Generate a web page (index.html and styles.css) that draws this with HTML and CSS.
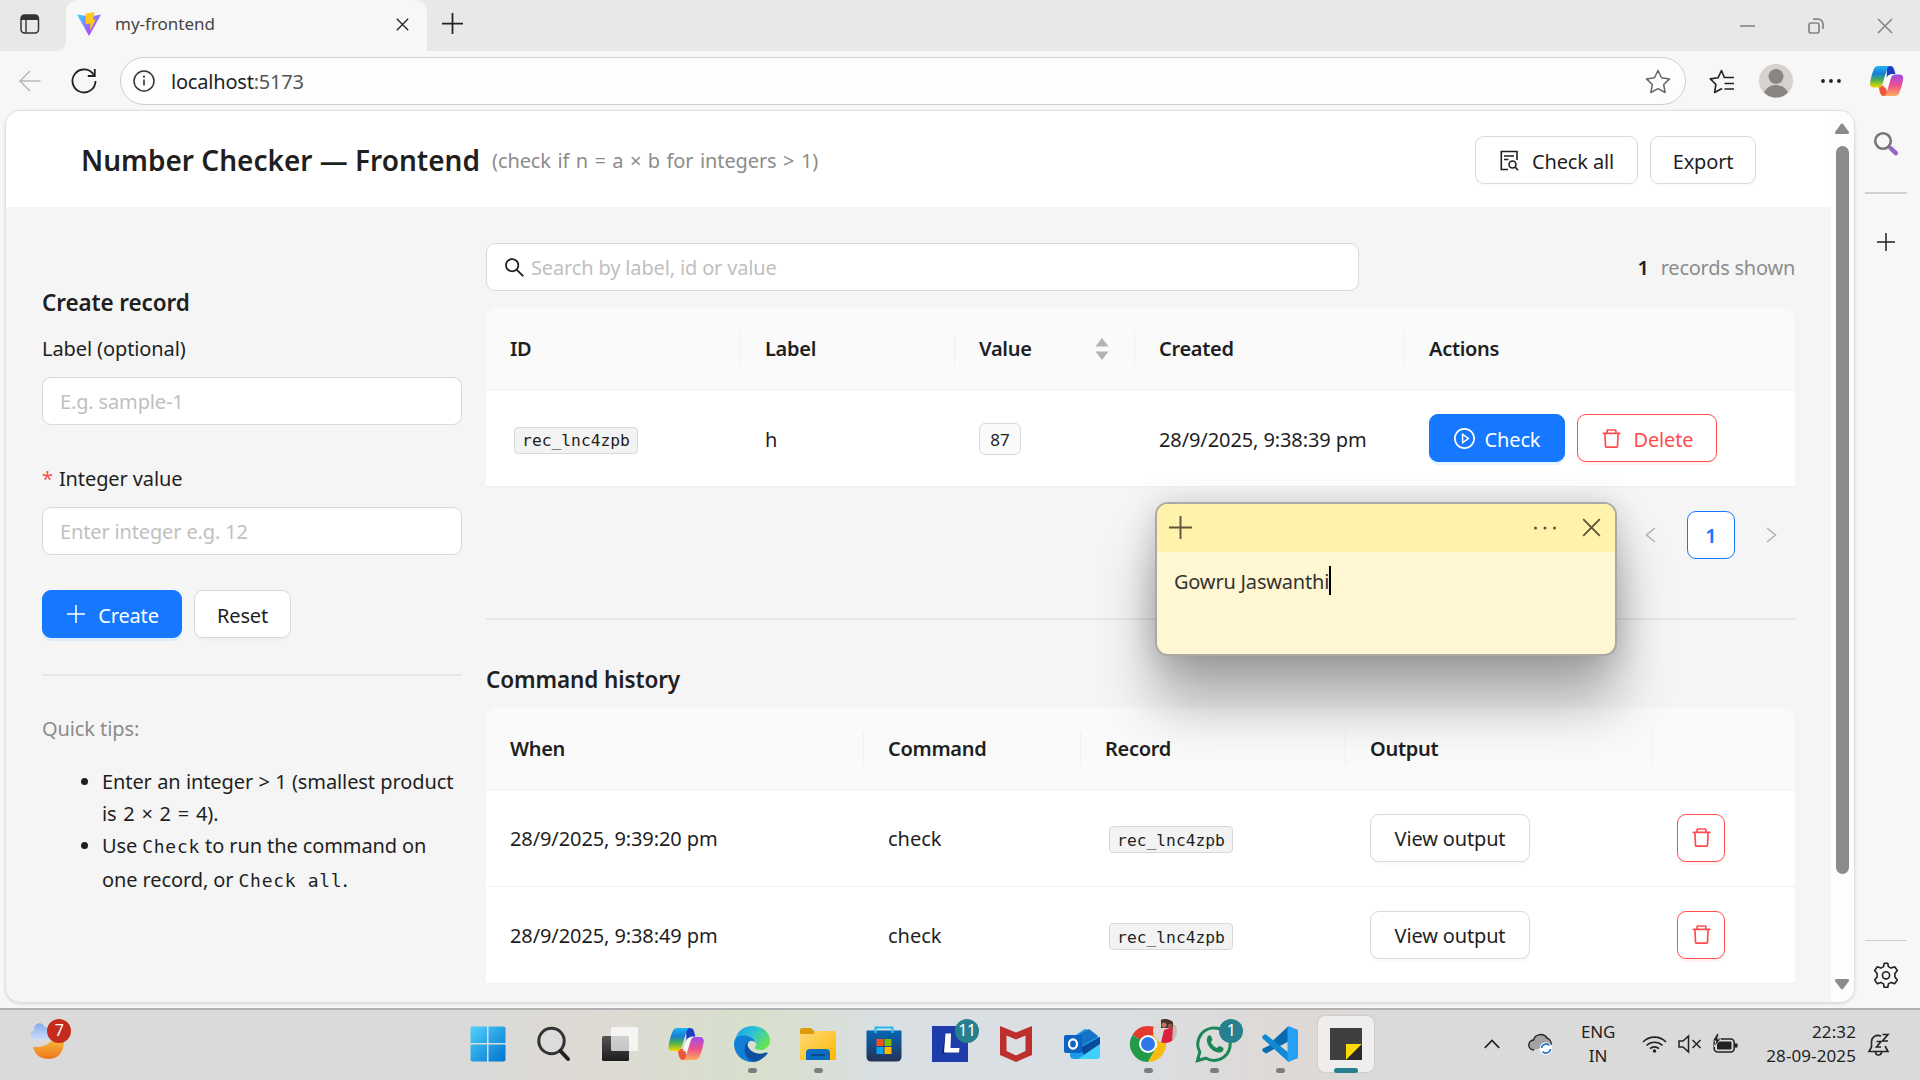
FILE: index.html
```html
<!DOCTYPE html>
<html lang="en">
<head>
<meta charset="utf-8">
<title>my-frontend</title>
<link rel="stylesheet" href="styles.css">
</head>
<body>
<svg class="defs" width="0" height="0" aria-hidden="true">
  <defs>
    <linearGradient id="cp1" x1="0" y1="0" x2="0" y2="1"><stop offset="0" stop-color="#1fb4f4"/><stop offset=".35" stop-color="#1480d8"/><stop offset=".65" stop-color="#4caf50"/><stop offset="1" stop-color="#f7d800"/></linearGradient>
    <linearGradient id="cp2" x1="0" y1="0" x2="0" y2="1"><stop offset="0" stop-color="#9a4dee"/><stop offset=".5" stop-color="#ee4f8e"/><stop offset="1" stop-color="#ffab5c"/></linearGradient>
    <linearGradient id="win" x1="0" y1="0" x2="1" y2="1"><stop offset="0" stop-color="#50d2fb"/><stop offset="1" stop-color="#0072cf"/></linearGradient>
    <linearGradient id="ed1" x1="0" y1="0" x2="1" y2=".6"><stop offset="0" stop-color="#1a9be8"/><stop offset=".5" stop-color="#2dc3d6"/><stop offset="1" stop-color="#66e351"/></linearGradient>
    <linearGradient id="fold" x1="0" y1="0" x2="1" y2="1"><stop offset="0" stop-color="#ffd97a"/><stop offset="1" stop-color="#fcb900"/></linearGradient>
    <linearGradient id="store" x1="0" y1="0" x2="0" y2="1"><stop offset="0" stop-color="#0566b4"/><stop offset="1" stop-color="#263258"/></linearGradient>
    <linearGradient id="moon" x1="0" y1="0" x2="0" y2="1"><stop offset="0" stop-color="#f5b73c"/><stop offset="1" stop-color="#f0761c"/></linearGradient>
    <linearGradient id="cloud" x1="0" y1="0" x2="0" y2="1"><stop offset="0" stop-color="#86aeea"/><stop offset="1" stop-color="#c9dcf8"/></linearGradient>
    <linearGradient id="vite" x1="0" y1="0" x2="1" y2="1"><stop offset="0" stop-color="#41d1ff"/><stop offset=".6" stop-color="#9a5cff"/><stop offset="1" stop-color="#d02bff"/></linearGradient>
    <linearGradient id="dark" x1="0" y1="0" x2="0" y2="1"><stop offset="0" stop-color="#555"/><stop offset="1" stop-color="#1c1c1c"/></linearGradient>
    <symbol id="i-copilot" viewBox="0 0 36 34">
      <path d="M18 1h4c2.500 0 3.500 1.500 4.200 4l1.300 4.500H24c-3 0-4.500 2-5.500 5z" fill="#1a3fc4"/>
      <path d="M9.500 22h6.800l4 11H15c-2.600 0-3.500-2-4.200-4.500z" fill="#f0563a"/>
      <path d="M9.600 1H22c-2 0-3 1.600-3.800 4.300l-4.400 14.500C13 22.500 12 24 9.300 24H4.500C1.500 24 0 22.200.6 18.700 1.600 12.500 3 8 4.500 4.500 5.500 2 7 1 9.600 1z" fill="url(#cp1)"/>
      <path d="M26.400 33H14.500c2 0 3-1.600 3.800-4.300l4.200-14.200c.8-2.700 2-4.500 4.700-4.500h4.500c3.500 0 4.500 2.500 3.900 5.500-1 6-2.500 10.500-4 14-1 2.500-2.600 3.500-5.200 3.500z" fill="url(#cp2)"/>
      <path d="M18.800 12.500q.6-1.500 2-1.500h2.700q-.8 1-1.200 2.500l-2.800 9q-.5 1.500-2 1.500h-3q.9-1 1.300-2.500z" fill="#fff" opacity=".85"/>
    </symbol>
    <symbol id="i-trash" viewBox="64 64 896 896"><path fill="currentColor" d="M360 184h-8c4.400 0 8-3.600 8-8v8h304v-8c0 4.400 3.600 8 8 8h-8v72h72v-80c0-35.300-28.700-64-64-64H352c-35.300 0-64 28.700-64 64v80h72v-72zm504 72H160c-17.700 0-32 14.300-32 32v32c0 4.400 3.600 8 8 8h60.400l24.700 523c1.600 34.100 29.800 61 63.900 61h454c34.200 0 62.300-26.800 63.900-61l24.700-523H888c4.400 0 8-3.600 8-8v-32c0-17.700-14.300-32-32-32zM731.300 840H292.700l-24.200-512h487l-24.200 512z"/></symbol>
    <symbol id="i-search" viewBox="64 64 896 896"><path fill="currentColor" d="M909.600 854.500L649.900 594.800C690.200 542.700 712 479 712 412c0-80.200-31.300-155.400-87.900-212.100-56.600-56.700-132-87.900-212.100-87.900s-155.500 31.300-212.100 87.900C143.200 256.500 112 331.800 112 412c0 80.100 31.300 155.500 87.900 212.100C256.500 680.800 331.800 712 412 712c67 0 130.600-21.800 182.700-62l259.700 259.600a8.200 8.200 0 0011.600 0l43.600-43.500a8.200 8.200 0 000-11.600zM570.400 570.400C528 612.700 471.800 636 412 636s-116-23.300-158.400-65.600C211.300 528 188 471.800 188 412s23.300-116.100 65.600-158.400C296 211.300 352.200 188 412 188s116.100 23.200 158.400 65.600S636 352.200 636 412s-23.300 116.100-65.600 158.400z"/></symbol>
    <symbol id="i-play" viewBox="64 64 896 896"><path fill="currentColor" d="M512 64C264.600 64 64 264.600 64 512s200.600 448 448 448 448-200.600 448-448S759.400 64 512 64zm0 820c-205.400 0-372-166.600-372-372s166.600-372 372-372 372 166.600 372 372-166.600 372-372 372z"/><path fill="currentColor" d="M719.400 499.100l-296.100-215A15.900 15.900 0 00398 297v430c0 13.100 14.800 20.500 25.300 12.900l296.100-215a15.900 15.900 0 000-25.800zm-257.600 134V390.900L628.500 512 461.800 633.100z"/></symbol>
    <symbol id="i-close" viewBox="0 0 16 16"><path d="M1 1l14 14M15 1L1 15" fill="none" stroke="currentColor" stroke-width="1.600"/></symbol>
    <symbol id="i-plus" viewBox="0 0 18 18"><path d="M9 0v18M0 9h18" fill="none" stroke="currentColor" stroke-width="1.500"/></symbol>
  </defs>
</svg>

<div class="desktop">
  <header class="tabstrip">
    <div class="tab-menu"><svg width="22" height="22" viewBox="0 0 22 22"><rect x="2" y="2" width="17.500" height="18" rx="3.500" fill="none" stroke="#333" stroke-width="1.500"/><path d="M2 7V5.500A3.500 3.500 0 015.500 2h10.500a3.500 3.500 0 013.500 3.500V7z" fill="#333"/><path d="M7 7v13" stroke="#333" stroke-width="1.400"/></svg></div>
    <div class="tab">
      <svg width="24" height="24" viewBox="0 0 24 24"><path d="M0 2.500l12 21.500L24 2.500 13 4.500z" fill="url(#vite)"/><path d="M8.500 1.800L17.500 0l-1.500 7.500h2.800L13 18.800l.3-7.300-4.600.8z" fill="#ffc61c"/></svg>
      <span class="tab-title">my-frontend</span>
      <svg class="ink" width="13" height="13"><use href="#i-close"/></svg>
    </div>
    <svg class="new-tab ink" width="21" height="21"><use href="#i-plus"/></svg>
    <div class="win-ctl">
      <svg width="15" height="15" viewBox="0 0 15 15"><path d="M0 8h15" stroke="#858585" stroke-width="1.600"/></svg>
      <svg width="16" height="16" viewBox="0 0 16 16" fill="none" stroke="#858585" stroke-width="1.700"><rect x="1" y="5" width="10" height="10" rx="2"/><path d="M5 1.200h5a5 5 0 015 5V11"/></svg>
      <svg width="16" height="16"><use href="#i-close"/></svg>
    </div>
  </header>

  <div class="toolbar">
    <svg class="back" width="22" height="22" viewBox="0 0 22 22" fill="none" stroke="#b9b9b9" stroke-width="1.500"><path d="M21.500 11H1M11 1L1 11l10 10"/></svg>
    <svg class="reload" width="26" height="26" viewBox="0 0 26 26" fill="none" stroke="#222" stroke-width="1.800"><path d="M24.500 13A11.500 11.500 0 1121.500 5.200L23.500 7.500M23.800 1v7h-7"/></svg>
    <div class="address">
      <svg width="22" height="22" viewBox="0 0 22 22"><circle cx="11" cy="11" r="10" fill="none" stroke="#333" stroke-width="1.500"/><path d="M11 9.500v6" stroke="#333" stroke-width="1.600"/><circle cx="11" cy="6.700" r="1.100" fill="#333"/></svg>
      <span class="url">localhost<span class="port">:5173</span></span>
      <svg width="26" height="25" viewBox="0 0 26 25" fill="none" stroke="#666" stroke-width="1.500" stroke-linejoin="round"><path d="M13 1.500l3.500 7.300 8 1.100-5.800 5.600 1.400 8L13 19.700l-7.100 3.800 1.400-8L1.500 9.900l8-1.100z"/></svg>
    </div>
    <svg class="favs" width="26" height="25" viewBox="0 0 26 25" fill="none" stroke="#222" stroke-width="1.600" stroke-linejoin="round"><path d="M15.500 9L12.500 1.500 9 8.800l-7.700 1.100 5.600 5.600-1.300 8L13 19.500M15 8.500h10M15.500 14.500H25M15.500 20H25"/></svg>
    <svg class="avatar" width="34" height="34" viewBox="0 0 34 34"><clipPath id="av"><circle cx="17" cy="17" r="16.500"/></clipPath><circle cx="17" cy="17" r="17" fill="#d5d2cf"/><g clip-path="url(#av)" fill="#8a8582"><circle cx="17" cy="12.500" r="7.500"/><ellipse cx="17" cy="32" rx="12.500" ry="11"/></g></svg>
    <svg class="more" width="20" height="6" viewBox="0 0 20 6" fill="#222"><circle cx="2" cy="3" r="1.900"/><circle cx="10" cy="3" r="1.900"/><circle cx="18" cy="3" r="1.900"/></svg>
    <svg class="copilot" width="35" height="32"><use href="#i-copilot"/></svg>
  </div>

  <div class="browser-body">
    <main class="viewport">
      <div class="page">
        <div class="app-header">
          <h1>Number Checker — Frontend</h1>
          <span class="subtitle">(check if n = a × b for integers &gt; 1)</span>
          <button class="btn btn-all"><svg width="21" height="21" viewBox="0 0 21 21" fill="none" stroke="currentColor" stroke-width="1.600"><path d="M9 19.500H2.300V1.500H18v8.500M5 6h10M5 9.500h4.500"/><circle cx="13.500" cy="14.500" r="3.500"/><path d="M16 17l3 3.300"/></svg><span>Check all</span></button>
          <button class="btn btn-export"><span>Export</span></button>
        </div>
        <div class="content">
          <aside class="side">
            <h2>Create record</h2>
            <label class="f-label">Label (optional)</label>
            <div class="input">E.g. sample-1</div>
            <label class="f-label second"><b class="req">*</b>Integer value</label>
            <div class="input">Enter integer e.g. 12</div>
            <div class="buttons">
              <button class="btn primary btn-create"><svg width="18" height="18"><use href="#i-plus"/></svg><span>Create</span></button>
              <button class="btn btn-reset"><span>Reset</span></button>
            </div>
            <hr>
            <p class="tips-title">Quick tips:</p>
            <ul class="tips">
              <li><span class="l1">Enter an integer &gt; 1 (smallest product</span><br><span class="ops">is 2 × 2 = 4).</span></li>
              <li>Use <code>Check</code> to run the command on<br><span class="last">one record, or <code>Check all</code>.</span></li>
            </ul>
          </aside>
          <section class="main">
            <div class="search-row">
              <div class="input search"><svg width="21" height="21"><use href="#i-search"/></svg><span>Search by label, id or value</span></div>
              <div class="count"><b>1</b><span>records shown</span></div>
            </div>
            <div class="table records">
              <div class="row head"><div>ID</div><div>Label</div><div class="sort">Value<svg width="14" height="22" viewBox="0 0 14 22" fill="#b3b3b3"><path d="M7 0l6.500 8.500H.5zM7 22l6.500-8.500H.5z"/></svg></div><div>Created</div><div>Actions</div></div>
              <div class="row"><div><span class="code">rec_lnc4zpb</span></div><div class="txt">h</div><div class="txt"><span class="tag">87</span></div><div class="date">28/9/2025, 9:38:39 pm</div>
                <div class="acts"><button class="btn primary btn-check"><svg width="21" height="21"><use href="#i-play"/></svg><span>Check</span></button><button class="btn danger btn-delete"><svg width="21" height="21"><use href="#i-trash"/></svg><span>Delete</span></button></div></div>
            </div>
            <div class="pager">
              <svg width="11" height="16" viewBox="0 0 11 16" fill="none" stroke="#b5b5b5" stroke-width="1.600"><path d="M10 1L1.500 8l8.500 7"/></svg>
              <span class="pg">1</span>
              <svg width="11" height="16" viewBox="0 0 11 16" fill="none" stroke="#b5b5b5" stroke-width="1.600"><path d="M1 1l8.500 7L1 15"/></svg>
            </div>
            <hr class="main-hr">
            <h2 class="hist">Command history</h2>
            <div class="table history">
              <div class="row head"><div>When</div><div>Command</div><div>Record</div><div>Output</div><div></div></div>
              <div class="row"><div class="date">28/9/2025, 9:39:20 pm</div><div class="txt">check</div><div><span class="code">rec_lnc4zpb</span></div><div><button class="btn btn-view"><span>View output</span></button></div><div><button class="btn danger btn-icon"><svg width="21" height="21"><use href="#i-trash"/></svg></button></div></div>
              <div class="row"><div class="date">28/9/2025, 9:38:49 pm</div><div class="txt">check</div><div><span class="code">rec_lnc4zpb</span></div><div><button class="btn btn-view"><span>View output</span></button></div><div><button class="btn danger btn-icon"><svg width="21" height="21"><use href="#i-trash"/></svg></button></div></div>
            </div>
          </section>
        </div>
      </div>
      <div class="scrollbar">
        <svg width="14" height="11" viewBox="0 0 14 11"><path d="M5.800 1.200a1.500 1.500 0 012.400 0L14 9q.3 2-1.200 2H1.200Q-.3 11 0 9z" fill="#8b8b8b"/></svg>
        <div class="thumb"></div>
        <svg class="down" width="14" height="11" viewBox="0 0 14 11"><path d="M5.800 9.800a1.500 1.500 0 002.400 0L14 2q.3-2-1.200-2H1.200Q-.3 0 0 2z" fill="#8b8b8b"/></svg>
      </div>
    </main>
    <nav class="sidebar">
      <svg width="26" height="26" viewBox="0 0 26 26"><circle cx="10" cy="10" r="7.800" fill="none" stroke="#777" stroke-width="2.600"/><path d="M15.500 15.500l2.500 2.500" stroke="#777" stroke-width="3"/><path d="M18 17.500l4.800 4.600" stroke="#9565cc" stroke-width="4.500" stroke-linecap="round"/></svg>
      <span class="line"></span>
      <svg class="ink" width="18" height="18"><use href="#i-plus"/></svg>
      <span class="line bottom"></span>
      <svg width="26" height="27" viewBox="0 0 26 27" fill="none" stroke="#222" stroke-width="1.600" stroke-linejoin="round"><path d="M10.600 4.600L11.200 1.300h3.600l.6 3.300 2.700 1.500 3.600-1.300 2.600 3.700-2.400 3v3.500l2.400 3-2.600 3.700-3.600-1.300-2.700 1.500-.6 3.400h-3.600l-.6-3.400-2.700-1.500-3.600 1.300-2.600-3.700 2.400-3v-3.500l-2.400-3 2.600-3.700 3.600 1.300z"/><circle cx="13" cy="13.300" r="3.600"/></svg>
    </nav>
  </div>

  <footer class="taskbar">
    <div class="weather">
      <svg width="38" height="36" viewBox="0 0 38 36"><path d="M3 23q13 1 19-7l12 0q0 18-15 19Q6 35 3 23z" fill="url(#moon)"/><path d="M4.500 15.500a4.700 4.700 0 01-.5-9 5.500 5.500 0 0111-3 7 7 0 019 6.500v5.500z" fill="url(#cloud)"/></svg>
      <span class="badge red">7</span>
    </div>
    <div class="apps">
      <div class="app"><svg width="36" height="36" viewBox="0 0 36 36"><path d="M.5 2.500a2 2 0 012-2H17V17H.500zM18.500.5h15a2 2 0 012 2V17h-17zM.5 18.500H17v17H2.500a2 2 0 01-2-2zM18.500 18.500h17v15a2 2 0 01-2 2h-15z" fill="url(#win)"/></svg></div>
      <div class="app"><svg width="34" height="36" viewBox="0 0 34 36"><circle cx="14.500" cy="15" r="12.700" fill="#dcdcdc" stroke="#333" stroke-width="3"/><path d="M23.500 25l7.500 8" stroke="#222" stroke-width="4" stroke-linecap="round"/></svg></div>
      <div class="app"><svg width="36" height="34" viewBox="0 0 36 34"><rect x="0" y="9" width="27" height="25" rx="1.500" fill="url(#dark)"/><rect x="9" y="0" width="27" height="24" rx="1.500" fill="#fff" opacity=".72"/></svg></div>
      <div class="app"><svg width="36" height="34"><use href="#i-copilot"/></svg></div>
      <div class="app run"><svg width="36" height="36" viewBox="0 0 36 36"><path d="M1 14C3 5 10 0 18.500 0 29 0 36 7 36 14.500c0 6-4.500 9.500-9.500 9.500-4 0-6-1.500-5.500-3 1.500-1 1.500-3 1-4.500C20 10 8 7 1 14z" fill="url(#ed1)"/><path d="M0 18C0 11 6 9 11 9.500c6 .5 10.500 4 11 8-2-4-8-4-9 2C12 27 18 33 26 34c-3 1.500-6 2-8 2C8 36 0 28 0 18z" fill="#0f7fd8"/><path d="M14 15.500C8.500 20 9 33 20 35.800 26 35 31 31 33.500 27.500c.5-1-.3-1.300-1.500-.9-8 3-16-.6-18-6-.7-2-.7-3.500 0-5.100z" fill="#0f4fa0"/></svg></div>
      <div class="app run"><svg width="36" height="34" viewBox="0 0 36 34"><path d="M0 3a2 2 0 012-2h9l4 4v3H0z" fill="#dd9b0c"/><path d="M0 7h13l3-3h18a2 2 0 012 2v27H0z" fill="url(#fold)"/><path d="M6 33v-7a4 4 0 014-4h16a4 4 0 014 4v7z" fill="#0c6cc0"/><path d="M11 28h14" stroke="#084a8c" stroke-width="2"/></svg></div>
      <div class="app"><svg width="36" height="36" viewBox="0 0 36 36"><path d="M9.500 8V1.500h17V8" fill="none" stroke="#22b8ef" stroke-width="2"/><path d="M.5 4.500h35V31a4.500 4.500 0 01-4.500 4.500H5A4.500 4.500 0 01.5 31z" fill="url(#store)"/><path d="M9.500 3v4M26.500 3v4" stroke="#35c9fa" stroke-width="2"/><path d="M10.500 13h7v7h-7z" fill="#f25022"/><path d="M18.500 13h7v7h-7z" fill="#7fba00"/><path d="M10.500 21h7v7h-7z" fill="#00a4ef"/><path d="M18.500 21h7v7h-7z" fill="#ffb900"/></svg></div>
      <div class="app"><svg width="36" height="36" viewBox="0 0 36 36"><path d="M0 0h36v36H0z" fill="#1e3dab"/><path d="M13 11l-3 16 4 1 2-18z" fill="#0d2670"/><path d="M13.500 7.500h5.500L18.500 22h9l-.5 4.500H12z" fill="#fff"/></svg><span class="badge">11</span></div>
      <div class="app"><svg width="32" height="36" viewBox="0 0 32 36"><path d="M0 0l16 6.500L32 0v29l-16 7-16-7zM6.500 9.500V25L16 29.500 25.500 25V9.500L16 13.500z" fill="#bd2f2c"/></svg></div>
      <div class="app"><svg width="36" height="32" viewBox="0 0 36 32"><path d="M6 11L20 1.500q1.500-.8 3 0L36 10v17a4 4 0 01-4 4H10a4 4 0 01-4-4z" fill="#1c9be8"/><path d="M16 20L36 9v7L20 27z" fill="#0a4a9a"/><path d="M9 10L25 1l9 7-18 11z" fill="#1673ca"/><path d="M14 31L36 16v11a4 4 0 01-4 4z" fill="#3fd0fb"/><rect x="0" y="7" width="18" height="18" rx="2" fill="#0c64c0"/><ellipse cx="9" cy="16" rx="4" ry="4.600" fill="none" stroke="#fff" stroke-width="2.200"/></svg></div>
      <div class="app run"><svg width="36" height="36" viewBox="0 0 36 36"><path d="M18 18L2.400 9A18 18 0 0133.600 9z" fill="#e33b2e"/><path d="M18 18L2.400 9A18 18 0 0018 36l8-14z" fill="#229a48"/><path d="M18 18L33.600 9H18A9 9 0 0126 22.500L18 36A18 18 0 0033.600 9z" fill="#fbbc12"/><circle cx="18" cy="18" r="9" fill="#fff"/><circle cx="18" cy="18" r="7" fill="#2f78ec"/></svg>
        <svg class="badge photo" viewBox="0 0 24 24"><clipPath id="ph"><circle cx="12" cy="12" r="12"/></clipPath><g clip-path="url(#ph)"><path d="M0 0h24v24H0z" fill="#ddd8d6"/><path d="M8 0h12v9H8z" fill="#4b3029"/><path d="M8 24l3-13 9-3 1 16z" fill="#d9203f"/><path d="M20 6h4v18h-5z" fill="#c9bdb6"/><circle cx="11" cy="6" r="2.500" fill="#b27a62"/><circle cx="17" cy="7" r="2.300" fill="#8d5a48"/></g></svg></div>
      <div class="app run"><svg width="36" height="36" viewBox="0 0 36 36"><path d="M1.500 34.500l2.300-8.600A16.200 16.200 0 1110 32.200z" fill="none" stroke="#1b8755" stroke-width="3"/><path d="M12 10c1-1.200 2.500-1 3 .1l1.400 3.200c.4 1.200-1.700 2.400-1.300 3.200 1.200 2.600 3 4.300 5.700 5.400.9.300 2-2.300 3.100-1.800l3.200 1.600c1 .6.300 3.800-2.100 4.600C17.500 28.500 7.500 17 12 10z" fill="#1b8755"/></svg><span class="badge">1</span></div>
      <div class="app run"><svg width="36" height="36" viewBox="0 0 36 36"><path d="M26.500 9.500v6L4 27.500 1 25.500q-1.500-1.500 0-3z" fill="#0a6ab0"/><path d="M26 .5L11 14.500l5 4 10.500-9z" fill="#0a6ab0"/><path d="M4 8.500q-1-.5-2 .3L.8 10q-1.300 1.300 0 2.700L26.500 36l1-8.500z" fill="#1188d4"/><path d="M26.500 0L36 4v28l-9.500 4q-1 0-1-1.500v-33Q25.500 0 26.500 0z" fill="#26a0f2"/></svg></div>
      <div class="app active"><svg width="32" height="32" viewBox="0 0 32 32"><path d="M0 0h32v32H0z" fill="#3f3f3f"/><path d="M16 16h16L16 32z" fill="#ffd900"/><path d="M32 16v16H16z" fill="#2a2a2a"/></svg></div>
    </div>
    <div class="tray">
      <svg class="t-chev" width="16" height="10" viewBox="0 0 16 10" fill="none" stroke="#222" stroke-width="1.700"><path d="M.8 8.800L8 1.500l7.200 7.300"/></svg>
      <svg class="t-cloud" width="25" height="22" viewBox="0 0 25 22"><path d="M6 17a5 5 0 01-.5-10 7.500 7.500 0 0113.500-2A6 6 0 0123 12" fill="#a3a3a3" stroke="#222" stroke-width="1.400"/><circle cx="18" cy="15.500" r="6.300" fill="#fff"/><path d="M13.500 15a4.600 4.600 0 018-2.500M22.500 16a4.600 4.600 0 01-8 2.500" fill="none" stroke="#1271cc" stroke-width="1.600"/></svg>
      <div class="lang">ENG<br>IN</div>
      <svg class="t-wifi" width="25" height="18" viewBox="0 0 25 18" fill="none" stroke="#222" stroke-width="1.600"><path d="M1 7a16 16 0 0123 0M4.500 10.500a11.500 11.500 0 0116 0M8 13.700a6.500 6.500 0 019 0"/><circle cx="12.500" cy="16" r="1.700" fill="#222" stroke="none"/></svg>
      <svg class="t-vol" width="24" height="18" viewBox="0 0 24 18" fill="none" stroke="#222" stroke-width="1.500"><path d="M1 6v6h4l5.500 5V1L5 6zM14.500 5l8 8M22.500 5l-8 8"/></svg>
      <svg class="t-bat" width="25" height="20" viewBox="0 0 25 20"><rect x="1.200" y="5" width="20" height="13" rx="3.500" fill="none" stroke="#222" stroke-width="1.600"/><rect x="4" y="7.500" width="14.500" height="8" rx="1" fill="#222"/><path d="M22 9.500h2.500v4H22z" fill="#222"/><path d="M4-.5L-.5 7h3.500l-2 6L8 5H4.500l1.500-5.500z" fill="#222" stroke="#dadada" stroke-width=".8"/></svg>
      <div class="clock">22:32<br>28-09-2025</div>
      <svg class="t-bell" width="22" height="23" viewBox="0 0 22 23" fill="none" stroke="#222" stroke-width="1.600"><path d="M13 3C8 1 3.500 4 3.500 9v5L1 18.500h19L17.500 14v-1M7.500 19a3 3 0 006 0M14.500 1.500H20L14.500 8H20M8.500 8.500H13L8.500 14H13"/></svg>
    </div>
  </footer>

  <div class="sticky">
    <div class="sticky-bar">
      <svg width="23" height="23"><use href="#i-plus"/></svg>
      <svg class="s-more" width="24" height="4" viewBox="0 0 24 4" fill="#5d563a"><circle cx="2.500" cy="2" r="1.500"/><circle cx="12" cy="2" r="1.500"/><circle cx="21.500" cy="2" r="1.500"/></svg>
      <svg width="19" height="19"><use href="#i-close"/></svg>
    </div>
    <div class="sticky-text"><span>Gowru Jaswanthi</span><span class="caret"></span></div>
  </div>
</div>
</body>
</html>
```
FILE: styles.css
```css
* { box-sizing: border-box; }
body { margin: 0; font-family: "Noto Sans", sans-serif; font-size: 20px; color: #1f1f1f; overflow: hidden; }
svg { display: block; flex: none; overflow: visible; }
h1, h2, p, ul { margin: 0; }
button { font: inherit; }
.defs { position: absolute; }
.ink { color: #222; }
.desktop { position: relative; width: 1920px; height: 1080px; display: flex; flex-direction: column; background: #f7f7f7; }

/* browser chrome */
.tabstrip { height: 51px; display: flex; background: #e8e8e8; }
.tab-menu { width: 66px; padding: 13px 0 0 19px; background: #e8e8e8; border-bottom-right-radius: 10px; box-shadow: 8px 8px 0 #f7f7f7; }
.tab { z-index: 1; width: 361px; height: 51px; background: #f7f7f7; border-radius: 12px 12px 0 0; display: flex; align-items: center; padding: 0 18px 3px 11px; }
.tab-title { flex: 1; margin: -2px 0 0 14px; font-size: 17px; letter-spacing: 0; color: #444; }
.new-tab { margin: 13px 0 0 15px; }
.win-ctl { margin-left: auto; display: flex; align-items: center; gap: 53px; padding-right: 27px; color: #858585; }
.toolbar { height: 59px; display: flex; align-items: center; padding-top: 1px; }
.back { margin-left: 19px; }
.reload { margin-left: 30px; }
.address { margin-left: 23px; width: 1566px; height: 48px; border: 1.5px solid #cfcfcf; border-radius: 24px; background: #fdfdfd; display: flex; align-items: center; padding: 0 14px 0 12px; }
.url { flex: 1; margin-left: 16px; letter-spacing: -.2px; }
.port { color: #555; }
.favs { margin-left: 23px; }
.avatar { margin-left: 24px; }
.more { margin-left: 28px; }
.copilot { margin-left: 28px; }
.browser-body { height: 898px; display: flex; padding: 0 0 5px 5px; }
.viewport { width: 1850px; height: 893px; border: 1px solid #e0e0e0; border-radius: 15px; overflow: hidden; display: flex; background: #f5f5f5; box-shadow: 0 1px 3px #0002; }
.page { width: 1825px; }
.scrollbar { flex: 1; background: #fdfdfd; display: flex; flex-direction: column; align-items: center; padding: 12px 1px 0 0; }
.thumb { width: 13px; height: 728px; margin-top: 12px; border-radius: 7px; background: #8b8b8b; }
.down { margin-top: 105px; }
.sidebar { flex: 1; display: flex; flex-direction: column; align-items: center; padding: 21px 3px 14px 0; }
.line { width: 42px; height: 1.5px; margin: 35px 0 39px; background: #d0d0d0; }
.line.bottom { margin: auto 0 21px; }

/* app */
.app-header { height: 96px; background: #fff; display: flex; align-items: center; padding: 1px 75px 0 75px; }
h1 { font-size: 28px; line-height: 40px; font-weight: 600; letter-spacing: 0; width: 411px; white-space: nowrap; }
.subtitle { color: #8c8c8c; flex: 1; letter-spacing: -.1px; word-spacing: 1.4px; white-space: nowrap; padding-top: 1px; }
.btn { height: 48px; padding: 0; display: inline-flex; align-items: center; justify-content: center; gap: 12px; background: #fff; border: 1.5px solid #d9d9d9; border-radius: 9px; color: #1f1f1f; box-shadow: 0 3px 0 rgba(0,0,0,.02); white-space: nowrap; flex: none; letter-spacing: -.15px; }
.btn span { padding-top: 2px; }
.btn.primary { background: #1677ff; border-color: #1677ff; color: #fff; box-shadow: 0 3px 0 rgba(5,145,255,.1); }
.btn.danger { border-color: #ff4d4f; color: #ff4d4f; box-shadow: 0 3px 0 rgba(255,38,5,.06); }
.btn-all, .btn-export { margin-top: 1px; }
.btn-all { width: 163px; margin-right: 12px; }
.btn-export { width: 106px; }
.content { display: flex; padding: 36px 36px 0; gap: 24px; }
.side { width: 420px; padding-top: 42px; }
h2 { font-size: 22.500px; line-height: 36px; font-weight: 600; letter-spacing: -.12px; }
.f-label { display: flex; height: 33px; align-items: center; margin: 11px 0 12px; letter-spacing: -.1px; }
.f-label.second { margin-top: 37px; }
.req { color: #ff4d4f; font-weight: 400; margin-right: 6px; }
.input { height: 48px; background: #fff; border: 1.5px solid #d9d9d9; border-radius: 9px; display: flex; align-items: center; padding: 0 17px; color: #bfbfbf; letter-spacing: -.15px; }
.buttons { display: flex; gap: 12px; margin-top: 35px; }
.btn-create { width: 140px; gap: 13px; padding-left: 2px; }
.btn-reset { width: 97px; }
hr { border: 0; height: 1.5px; margin: 36px 0; background: #e6e6e6; }
.tips-title { color: #8c8c8c; line-height: 33px; letter-spacing: -.1px; }
.tips { padding-left: 60px; margin-top: 21px; line-height: 32px; letter-spacing: -.1px; white-space: nowrap; }
.tips .l1 { word-spacing: .3px; }
.tips .ops { word-spacing: 1.700px; }
.tips .last { display: inline-block; line-height: 35px; }
.tips code { font: 18px "DejaVu Sans Mono", monospace; letter-spacing: .7px; }
.main { width: 1309px; }
.search-row { display: flex; justify-content: space-between; align-items: center; }
.search { width: 873px; gap: 6px; }
.search svg { color: #1f1f1f; }
.count { display: flex; gap: 12px; color: #8c8c8c; letter-spacing: -.25px; }
.count b { color: #1f1f1f; font-weight: 600; }
.table { background: #fff; border-radius: 12px 12px 0 0; overflow: hidden; }
.records { margin-top: 17px; }
.row { display: grid; height: 97px; align-items: center; border-bottom: 1.5px solid #f0f0f0; }
.row > div { padding-left: 24px; white-space: nowrap; }
.records .row { grid-template-columns: 255px 214px 180px 270px 1fr; }
.history .row { grid-template-columns: 378px 217px 265px 307px 1fr; }
.row.head { height: 82px; background: #fafafa; font-weight: 600; letter-spacing: -.3px; }
.row.head > div { height: 33px; line-height: 34px; border-right: 1.5px solid #f0f0f0; }
.row.head > div:last-child { border-right: 0; }
.row.head > .sort { display: flex; justify-content: space-between; align-items: center; padding-right: 25px; }
.row > .date { letter-spacing: -.1px; padding-top: 2px; }
.row > .txt { padding-top: 2px; }
.code { display: inline-flex; align-items: center; height: 27px; width: 124px; justify-content: center; margin: 4px 0 0 4px; padding-top: 1px; vertical-align: middle; background: #f3f3f3; border: 1.5px solid #d9d9d9; border-radius: 4px; font: 16.300px "DejaVu Sans Mono", monospace; }
.tag { display: inline-flex; width: 42px; height: 32px; align-items: center; justify-content: center; vertical-align: middle; font-size: 17px; background: #fafafa; border: 1.500px solid #d9d9d9; border-radius: 6px; }
.acts { display: flex; gap: 12px; }
.btn-check { width: 136px; gap: 10px; }
.btn-delete { width: 140px; }
.pager { height: 48px; margin-top: 24px; display: flex; align-items: center; justify-content: flex-end; gap: 31px; padding-right: 18px; }
.pg { width: 48px; height: 48px; line-height: 47px; text-align: center; background: #fff; border: 1.5px solid #1677ff; border-radius: 9px; color: #1677ff; font-weight: 600; }
.main-hr { margin: 59px 0 42px; }
.history { margin-top: 10px; }
.btn-view { width: 160px; }
.btn-icon { width: 48px; }

/* sticky note window */
.sticky { position: absolute; left: 1155px; top: 502px; width: 462px; height: 154px; border: 2px solid #aaa9a4; border-radius: 13px; background: #fff7d1; box-shadow: 0 48px 56px rgba(0,0,0,.3), 0 2px 32px rgba(0,0,0,.18); overflow: hidden; }
.sticky-bar { height: 48px; background: #fff2ab; display: flex; align-items: center; padding: 0 14px 1px 12px; color: #5d563a; }
.s-more { margin: 0 25px 0 auto; }
.sticky-text { display: flex; align-items: center; height: 29px; margin: 14px 0 0 17px; letter-spacing: -.2px; color: #333; white-space: nowrap; }
.sticky-text span:first-child { padding-top: 2px; }
.caret { width: 2px; height: 29px; background: #000; }

/* taskbar */
.taskbar { position: relative; height: 72px; display: flex; border-top: 2px solid #b1b1b1; background: linear-gradient(90deg, #dadada 0 440px, #dedad4 600px, #d7e0cc 760px, #d9dfe2 880px, #dadfe3 1120px, #ded9d6 1290px, #dadada 1420px); }
.weather { position: relative; width: 455px; padding: 14px 0 0 30px; }
.badge { position: absolute; width: 24px; height: 24px; border-radius: 50%; background: #27808e; color: #fff; font-size: 16px; line-height: 23px; text-align: center; letter-spacing: -.5px; }
.badge.red { left: 47px; top: 9px; background: #c42b1c; }
.apps { display: flex; }
.app { position: relative; width: 66px; height: 68px; display: flex; align-items: center; justify-content: center; }
.app .badge { left: 38px; top: 9px; }
.app .photo { background: none; }
.app.run::after { content: ""; position: absolute; left: 29px; top: 58px; width: 9px; height: 5px; border-radius: 3px; background: #7d7d7d; }
.app.active { width: 56px; height: 56px; margin: 6px 0 0 5px; background: #f0eeec; border-radius: 7px; box-shadow: 0 0 1px 1px #0001; }
.app.active::after { content: ""; position: absolute; left: 16px; bottom: -1px; width: 24px; height: 5px; border-radius: 3px; background: #27808e; }
.tray { margin-left: auto; display: flex; align-items: center; font-size: 17px; line-height: 24px; letter-spacing: -.2px; padding: 0 30px 2px 0; }
.t-cloud { margin: 0 27px 0 28px; }
.lang { text-align: center; width: 36px; }
.t-wifi { margin-left: 26px; }
.t-vol { margin-left: 11px; }
.t-bat { margin-left: 11px; }
.clock { text-align: right; width: 96px; margin: 0 12px 0 22px; white-space: nowrap; letter-spacing: .1px; }
```
